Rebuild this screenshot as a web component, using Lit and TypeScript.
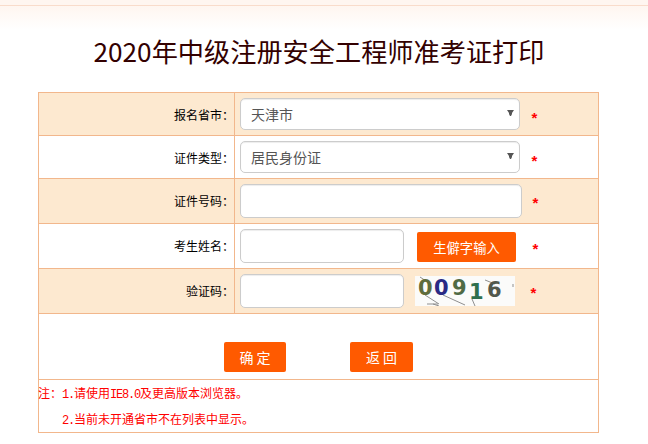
import { LitElement, html, css } from "lit";
import { customElement } from "lit/decorators.js";

const arrow = html`<svg class="arrow" width="7" height="6" viewBox="0 0 7 6"><path d="M0 0H7L5 3V4L4 6H3L2 4V3Z" fill="#555"></path></svg>`;

@customElement("app-root")
export class AppRoot extends LitElement {
  static styles = css`
    :host { display: block; width: 648px; height: 444px; overflow: hidden; background: #fff;
      font-family: "Noto Sans CJK SC", sans-serif; }
    .top { height: 5px; background: #fff6f0; border-bottom: 1px solid #f9dccb; }
    .fade { height: 24px; background: linear-gradient(#fff6f0, #fff); }
    h1 { margin: 0; height: 62px; font-size: 26.2px; font-weight: 400; line-height: 42px; color: #300; text-align: center; padding-right: 10px; box-sizing: border-box; }
    .form { margin-left: 38px; width: 561px; box-sizing: border-box; border: 1px solid #f2b78c; border-bottom: 0; }
    .row { display: grid; grid-template-columns: 196px 1fr; border-bottom: 1px solid #f2b78c; }
    .row.odd { background: #fde9d0; }
    .h42 { height: 42px; }
    .h44 { height: 44px; }
    .lab { border-right: 1px solid #f2b78c; font-size: 12px; color: #000; text-align: right; line-height: 43px; box-sizing: border-box; }
    .val { display: flex; align-items: flex-start; padding: 5px 0 0 5px; }
    .sel { position: relative; display: block; width: 280px; height: 32px; }
    .arrow { position: absolute; right: 6px; top: 12px; pointer-events: none; }
    select, input { box-sizing: border-box; border: 1px solid #ccc; border-radius: 5px; background: #fff;
      box-shadow: inset 0 1px 1px rgba(0,0,0,.075); font: 14px "Noto Sans CJK SC", sans-serif; color: #555; margin: 0; outline: 0; }
    select { appearance: none; display: block; width: 280px; height: 32px; padding: 0 10px; }
    input { height: 34px; }
    .w282 { width: 282px; }
    .w164 { width: 164px; }
    .star { display: block; width: 7px; height: 7px; color: #f00; font: 700 15px/15px "Liberation Sans", sans-serif; margin: 12px 0 0 11px; text-align: center; overflow: visible; }
    .s3 { margin: 11px 0 0 10px; }
    .s4 { margin: 12px 0 0 16px; }
    .s5 { margin: 11px 0 0 15px; }
    .gen { margin: 3px 0 0 13px; width: 99px; height: 30px; font-size: 13.3px; }
    .btn { display: flex; align-items: center; justify-content: center; box-sizing: border-box; background: #ff5a00; color: #fff; border-radius: 2px; }
    .cap { display: block; margin: 2px 0 0 11px; }
    .acts { height: 65px; display: flex; align-items: flex-start; padding: 28px 0 0 185px; box-sizing: border-box; }
    .sub { height: 30px; font-size: 14px; letter-spacing: 3px; padding-left: 3px; }
    .ok { width: 62px; }
    .back { width: 63px; margin-left: 64px; }
    .notes { box-sizing: border-box; border-top: 1px solid #f2b78c; border-bottom: 1px solid #f2b78c; color: #f00; font-size: 12px; line-height: 26px; height: 54px; }
    .notes p { margin: 0 0 0 -1px; height: 26px; white-space: nowrap; }
    .notes p + p { padding-left: 24px; }
    .m { font-family: "Liberation Mono", monospace; font-size: 12px; letter-spacing: -1.2px; }
  `;

  render() {
    return html`
      <div class="top"></div>
      <div class="fade"></div>
      <h1>2020年中级注册安全工程师准考证打印</h1>
      <div class="form">
        <div class="row odd h42">
          <div class="lab">报名省市：</div>
          <div class="val"><span class="sel"><select><option>天津市</option></select>${arrow}</span><span class="star">*</span></div>
        </div>
        <div class="row h42">
          <div class="lab">证件类型：</div>
          <div class="val"><span class="sel"><select><option>居民身份证</option></select>${arrow}</span><span class="star">*</span></div>
        </div>
        <div class="row odd h44">
          <div class="lab">证件号码：</div>
          <div class="val"><input class="w282" /><span class="star s3">*</span></div>
        </div>
        <div class="row h44">
          <div class="lab">考生姓名：</div>
          <div class="val"><input class="w164" /><div class="btn gen">生僻字输入</div><span class="star s4">*</span></div>
        </div>
        <div class="row odd h44">
          <div class="lab">验证码：</div>
          <div class="val"><input class="w164" />
            <svg class="cap" width="100" height="30" viewBox="0 0 100 30" font-family="DejaVu Sans, sans-serif" font-weight="700" font-size="21">
              <rect width="100" height="30" fill="#fbfbfa"></rect>
              <g stroke="#8f8f8f" stroke-width="1" fill="none">
                <path d="M5 1 L11 5"></path><path d="M10 19 L24 28"></path><path d="M28 19 L50 29"></path><path d="M57 23 L60 30"></path><path d="M12 28 H23"></path><path d="M18 28 L24 30"></path><path d="M70 4 L80 8"></path><path d="M98 8 V11"></path>
              </g>
              <text x="3" y="19" fill="#5f6c3c">0</text>
              <text x="19" y="19" fill="#2a2a85">0</text>
              <text x="37" y="19" fill="#4f6a44">9</text>
              <text x="54" y="23" fill="#2f6f4d">1</text>
              <text x="72" y="21" fill="#52584c">6</text>
            </svg>
            <span class="star s5">*</span></div>
        </div>
        <div class="acts">
          <div class="btn sub ok">确定</div>
          <div class="btn sub back">返回</div>
        </div>
        <div class="notes">
          <p>注：<span class="m">1.</span>请使用<span class="m">IE8.0</span>及更高版本浏览器。</p>
          <p><span class="m">2.</span>当前未开通省市不在列表中显示。</p>
        </div>
      </div>
    `;
  }
}
